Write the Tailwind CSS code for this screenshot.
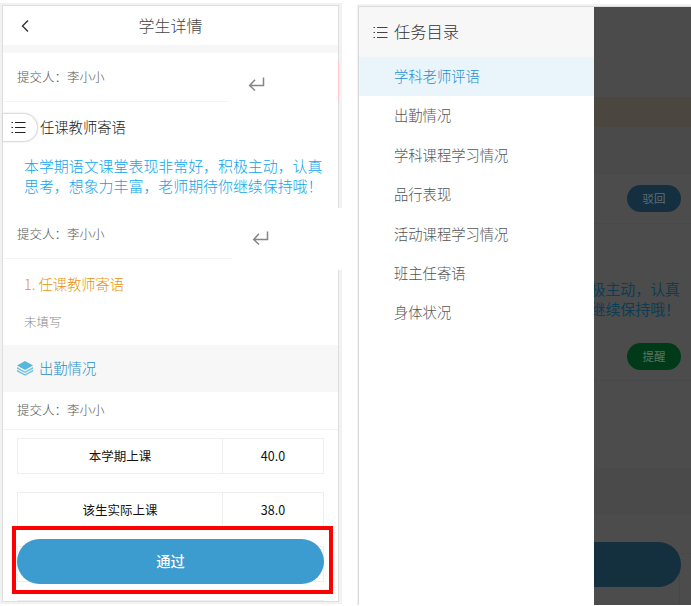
<!DOCTYPE html>
<html lang="zh-CN">
<head>
<meta charset="utf-8">
<title>学生详情</title>
<script src="https://cdn.jsdelivr.net/npm/@tailwindcss/browser@4"></script>
</head>
<body class="bg-white w-[691px] h-[606px] overflow-hidden flex font-['Noto_Sans_CJK_SC',sans-serif] font-light text-[#555]">

<!-- Detail screen -->
<section class="relative w-[342px] h-[601px] mt-[3px] shrink-0 bg-[#f2f2f2] pl-[2px] pr-[3px] pt-[2px]">
  <div class="h-[597px] border border-[#dedede] bg-white overflow-hidden flex flex-col">
    <header class="relative h-[39px] shrink-0 flex items-center justify-center pb-[2px] text-[16px] text-[#444]">
      <svg class="absolute left-[17px] top-[12px]" width="12" height="16" viewBox="0 0 12 16" fill="none" stroke="#333" stroke-width="1.4"><path d="M8 2.5 2.5 8 8 13.5"/></svg>
      <h1>学生详情</h1>
    </header>
    <div class="h-2 shrink-0 bg-[#f7f7f7]"></div>
    <div class="h-[49px] shrink-0 flex items-center pl-[14px] w-[226px] border-b border-[#f5f5f5] text-[12.5px]">提交人：李小小</div>
    <div class="h-[51px] shrink-0 flex items-center pb-[2px] pl-[37px] text-[14.3px] text-[#222]">任课教师寄语</div>
    <p class="h-[56px] shrink-0 pt-[3px] pl-[21px] text-[14.93px] leading-[20px] text-[#0ba6ee] whitespace-nowrap">本学期语文课堂表现非常好，积极主动，认真<br>思考，想象力丰富，老师期待你继续保持哦！</p>
    <div class="h-[50px] shrink-0 flex items-center pt-px pl-[14px] w-[230px] border-b border-[#f5f5f5] text-[12.5px]">提交人：李小小</div>
    <div class="h-[51px] shrink-0 flex items-center pb-[2px] pl-[21px] text-[14.3px] text-[#e8940a]">1. 任课教师寄语</div>
    <div class="h-[35px] shrink-0 pt-[2px] pl-[21px] text-[12.5px] leading-[20px] text-[#888]">未填写</div>
    <div class="h-[47px] shrink-0 bg-[#f7f7f7] flex items-center gap-[6px] pl-[14px] text-[14.3px] text-[#2a8fc9]">
      <svg width="16" height="15" viewBox="0 0 16 15"><path fill="#58b7dc" d="M8 0 16 4.5 8 9 0 4.5Z"/><g fill="#74c1e0"><path d="m0 6 8 4.4L16 6v1.8l-8 4.3-8-4.3Z"/><path d="m0 8.8 8 4.4 8-4.4v1.7l-8 4.3-8-4.3Z"/></g></svg>
      <h2 class="-mt-px">出勤情况</h2>
    </div>
    <div class="h-[38px] shrink-0 flex items-center pl-[14px] border-b border-[#f3f3f3] text-[12.5px]">提交人：李小小</div>
    <div class="pt-2 pl-[14px] flex flex-col gap-[18px] shrink-0 text-[12.5px] font-normal text-[#111]">
      <div class="w-[307px] h-[36px] grid grid-cols-[204px_101px] border border-[#eee] text-center leading-[34px]"><span>本学期上课</span><span class="border-l border-[#eee]">40.0</span></div>
      <div class="w-[307px] h-[36px] grid grid-cols-[204px_101px] border border-[#eee] text-center leading-[34px]"><span>该生实际上课</span><span class="border-l border-[#eee]">38.0</span></div>
      <div class="w-[307px] h-[36px] grid grid-cols-[204px_101px] border border-[#eee]"><span></span><span class="border-l border-[#eee]"></span></div>
      <div class="w-[307px] h-[36px] grid grid-cols-[204px_101px] border border-[#eee]"><span></span><span class="border-l border-[#eee]"></span></div>
    </div>
  </div>

  <!-- Pink edge and cleared strip at the card's right side -->
  <div class="absolute left-[338px] top-[57px] w-px h-[42px] bg-[#fbc9cd]"></div>
  <div class="absolute left-[232px] top-[205px] w-[110px] h-[62px] bg-white"></div>
  <svg class="absolute left-[248px] top-[73px]" width="18" height="16" viewBox="0 0 18 16" fill="none" stroke="#858585" stroke-width="1.5"><path d="M15.5 1.5V9.5H2M7 3.8 1.7 9.5 7 14.5"/></svg>
  <svg class="absolute left-[252px] top-[227px]" width="18" height="16" viewBox="0 0 18 16" fill="none" stroke="#858585" stroke-width="1.5"><path d="M15.5 1.5V9.5H2M7 3.8 1.7 9.5 7 14.5"/></svg>

  <!-- Floating catalogue tab -->
  <div class="absolute left-[3px] top-[110px] w-[35px] h-[29px] rounded-r-full border border-l-0 border-[#ddd] bg-white shadow-[0_0_2px_rgba(0,0,0,0.15)] flex items-center pl-[8px]">
    <svg width="15" height="13" viewBox="0 0 15 13" fill="none" stroke="#222" stroke-width="1.2"><path d="M4 1.5h10.5M4 6.5h10.5M4 11.5h10.5"/><path d="M.5 1.5H2M.5 6.5H2M.5 11.5H2"/></svg>
  </div>

  <!-- Highlighted approve button -->
  <div class="absolute left-[12px] top-[523px] w-[321px] h-[68px] border-4 border-[#fe0000] pt-[9px] pl-px">
    <button class="w-[307px] h-[45px] rounded-full bg-[#3c9bcf] text-white text-[14.3px] font-medium flex items-center justify-center pb-[2px]">通过</button>
  </div>
</section>

<!-- Catalogue drawer screen -->
<section class="ml-[15px] mt-[4px] w-[334px] h-[601px] bg-[#f2f2f2] pl-px pt-[2px]">
  <div class="h-[599px] w-[333px] border-l border-t border-[#dadada] flex">
    <nav class="w-[235px] shrink-0 bg-white flex flex-col text-[14.3px]">
      <div class="h-[50px] shrink-0 bg-[#f7f7f7] flex items-center gap-[6px] pl-[14px] text-[16.3px] text-[#333]">
        <svg width="15" height="13" viewBox="0 0 15 13" fill="none" stroke="#444" stroke-width="1.2"><path d="M4 1.5h10.5M4 6.5h10.5M4 11.5h10.5"/><path d="M.5 1.5H2M.5 6.5H2M.5 11.5H2"/></svg>
        <span class="-mt-[2px]">任务目录</span>
      </div>
      <a class="h-[39.4px] shrink-0 flex items-center pb-[2px] pl-[35px] bg-[#eaf4fb] text-[#2492d0]">学科老师评语</a>
      <a class="h-[39.4px] shrink-0 flex items-center pb-[2px] pl-[35px]">出勤情况</a>
      <a class="h-[39.4px] shrink-0 flex items-center pb-[2px] pl-[35px]">学科课程学习情况</a>
      <a class="h-[39.4px] shrink-0 flex items-center pb-[2px] pl-[35px]">品行表现</a>
      <a class="h-[39.4px] shrink-0 flex items-center pb-[2px] pl-[35px]">活动课程学习情况</a>
      <a class="h-[39.4px] shrink-0 flex items-center pb-[2px] pl-[35px]">班主任寄语</a>
      <a class="h-[39.4px] shrink-0 flex items-center pb-[2px] pl-[35px]">身体状况</a>
    </nav>
    <!-- Dimmed page behind the drawer -->
    <div class="w-[97px] overflow-hidden bg-[#4c4c4c] flex flex-col">
      <div class="h-[90px] shrink-0 bg-[#4b4b4b]"></div>
      <div class="h-[30px] shrink-0 bg-[#4b4640]"></div>
      <div class="h-[48px] shrink-0 bg-[#4a4a4a]"></div>
      <div class="h-[49px] shrink-0 border-b border-[#494949] pt-[10px] pl-[33px]">
        <div class="w-[54px] h-[27px] rounded-full bg-[#142f3f] text-[#5d6e78] text-[11.5px] font-normal flex items-center justify-center">驳回</div>
      </div>
      <div class="h-[98px] shrink-0 pt-[55px] flex justify-end pr-[11px]">
        <p class="text-[14.93px] leading-[20px] font-normal text-[#0d3c54] whitespace-nowrap shrink-0">极主动，认真<br>继续保持哦！</p>
      </div>
      <div class="h-[59px] shrink-0 border-b border-[#494949] pt-[21px] pl-[33px]">
        <div class="w-[54px] h-[27px] rounded-full bg-[#003a18] text-[#5a7563] text-[11.5px] font-normal flex items-center justify-center">提醒</div>
      </div>
      <div class="h-[87px] shrink-0"></div>
      <div class="h-[47px] shrink-0 bg-[#4a4a4a]"></div>
      <div class="relative grow">
        <div class="absolute left-0 top-[38px] w-full h-px bg-[#494949]"></div>
        <div class="absolute left-0 top-[47px] w-[86px] h-[44px] border-r border-b border-[#464646]"></div>
        <div class="absolute right-[10px] top-[27px] w-[307px] h-[45px] rounded-full bg-[#142f3d]"></div>
      </div>
    </div>
  </div>
</section>
</body>
</html>
